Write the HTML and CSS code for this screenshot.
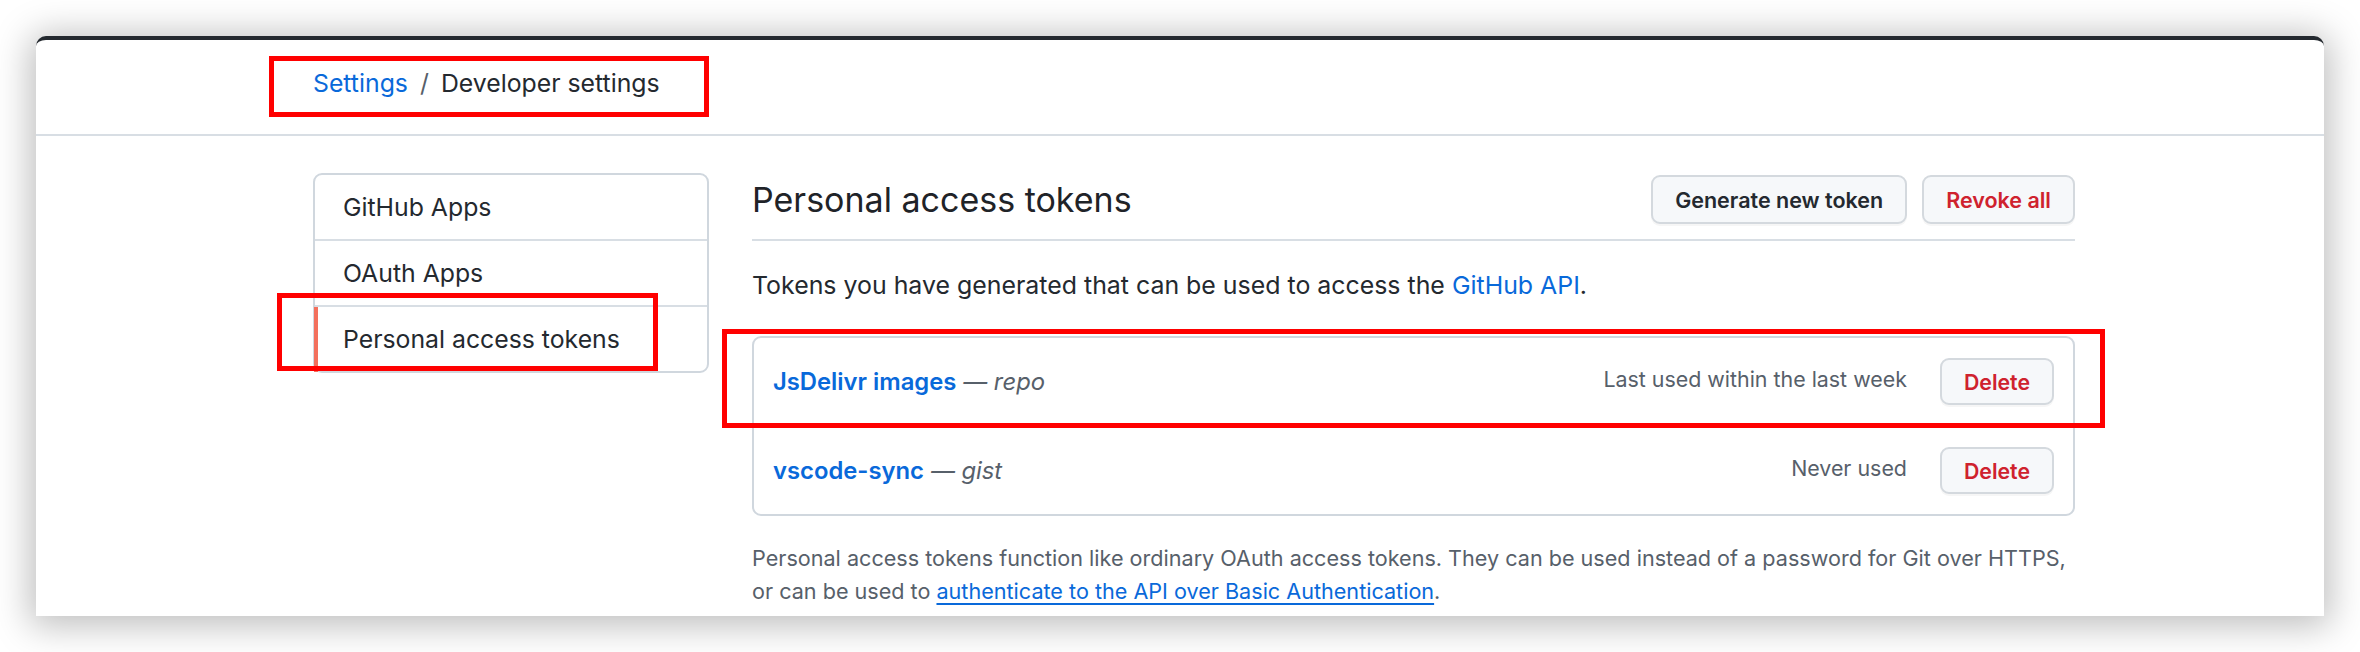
FILE: index.html
```html
<!DOCTYPE html>
<html>
<head>
<meta charset="utf-8">
<link rel="stylesheet" href="styles.css">
</head>
<body>
<div class="window">
  <header class="header">
    <nav class="breadcrumb">
      <a class="link" href="#">Settings</a><span class="sep">/</span><span class="current">Developer settings</span>
    </nav>
  </header>

  <div class="layout">
    <aside class="sidebar">
      <a class="menu-item" href="#">GitHub Apps</a>
      <a class="menu-item" href="#">OAuth Apps</a>
      <a class="menu-item selected" href="#">Personal access tokens</a>
    </aside>

    <main class="main">
      <div class="subhead">
        <h2 class="subhead-heading">Personal access tokens</h2>
        <div class="actions">
          <button class="btn">Generate new token</button>
          <button class="btn btn-danger">Revoke all</button>
        </div>
      </div>

      <p class="intro">Tokens you have generated that can be used to access the <a class="link" href="#">GitHub API</a>.</p>

      <div class="token-list">
        <div class="token-row">
          <div class="token-name"><a class="token-link" href="#">JsDelivr images</a><em class="scope">— repo</em></div>
          <span class="last-used">Last used within the last week</span>
          <button class="btn btn-sm btn-danger">Delete</button>
        </div>
        <div class="token-row">
          <div class="token-name"><a class="token-link" href="#">vscode-sync</a><em class="scope">— gist</em></div>
          <span class="last-used">Never used</span>
          <button class="btn btn-sm btn-danger">Delete</button>
        </div>
      </div>

      <p class="note"><span class="note-line">Personal access tokens function like ordinary OAuth access tokens. They can be used instead of a password for Git over HTTPS,</span><span class="note-line">or can be used to <a class="note-link" href="#">authenticate to the API over Basic Authentication</a>.</span></p>
    </main>
  </div>

  <div class="mark mark-breadcrumb"></div>
  <div class="mark mark-menu"></div>
  <div class="mark mark-token"></div>
</div>
</body>
</html>
```
FILE: styles.css
```css
* { box-sizing: border-box; }

html, body {
  margin: 0;
  background: #ffffff;
}

body {
  padding: 36px;
  font-family: Inter, "Liberation Sans", sans-serif;
  color: #24292f;
}

.window {
  position: relative;
  width: 2288px;
  height: 580px;
  background: #ffffff;
  border-top: 4px solid #24292f;
  border-radius: 10px 10px 0 0;
  box-shadow: 0 4px 36px 6px rgba(0, 0, 0, 0.26);
  overflow: hidden;
}

/* Header / breadcrumb */
.header {
  height: 96px;
  display: flex;
  align-items: center;
  padding: 0 0 8px 277px;
  border-bottom: 2px solid #d8dee4;
}

.breadcrumb {
  font-size: 24.8px;
  line-height: 36px;
  display: flex;
  align-items: baseline;
}

.link {
  color: #0969da;
  text-decoration: none;
}

.sep {
  color: #57606a;
  margin: 0 12px;
}

.current {
  color: #24292f;
}

/* Layout */
.layout {
  display: flex;
  align-items: flex-start;
  padding: 37px 0 0 277px;
}

/* Sidebar */
.sidebar {
  width: 396px;
  margin-right: 43px;
  border: 2px solid #d0d7de;
  border-radius: 9px;
  display: flex;
  flex-direction: column;
}

.menu-item {
  position: relative;
  display: flex;
  align-items: center;
  height: 64px;
  padding: 0 0 0 28px;
  font-size: 24.8px;
  color: #24292f;
  text-decoration: none;
}

.menu-item + .menu-item {
  height: 66px;
  border-top: 2px solid #d8dee4;
}

.menu-item.selected::before {
  content: "";
  position: absolute;
  left: -1px;
  top: 0;
  bottom: -1px;
  width: 4px;
  background: #f3705d;
}

/* Main */
.main {
  width: 1323px;
}

.subhead {
  display: flex;
  align-items: center;
  justify-content: space-between;
  padding: 2px 0 15px;
  border-bottom: 2px solid #d8dee4;
}

.subhead-heading {
  margin: 0;
  font-size: 34px;
  font-weight: 400;
  line-height: 49px;
  color: #1f2328;
}

.actions {
  display: flex;
  gap: 15px;
}

.btn {
  height: 49px;
  padding: 0 22px;
  font-family: inherit;
  font-size: 21.5px;
  font-weight: 600;
  color: #24292f;
  background: #f6f8fa;
  border: 2px solid #d4d9de;
  border-radius: 9px;
  box-shadow: 0 2px 0 rgba(27, 31, 36, 0.04);
}

.btn-danger {
  color: #cf222e;
}

.btn-sm {
  height: 47px;
  padding: 0 22px;
  font-size: 21.3px;
}

.intro {
  margin: 26px 0 0;
  font-size: 24.9px;
  line-height: 37px;
  color: #24292f;
}

/* Token list */
.token-list {
  margin-top: 32px;
  border: 2px solid #d0d7de;
  border-radius: 9px;
}

.token-row {
  display: flex;
  align-items: center;
  height: 87px;
  padding: 0 19px 0 19px;
}

.token-row + .token-row {
  height: 89px;
  border-top: 2px solid #d8dee4;
}

.token-name {
  flex: 1;
  display: flex;
  align-items: baseline;
  font-size: 23.8px;
  line-height: 32px;
}

.token-link {
  color: #0969da;
  font-weight: 600;
  text-decoration: none;
}

.scope {
  margin-left: 7px;
  color: #57606a;
  font-style: italic;
}

.last-used {
  margin: 0 33px 5px 0;
  font-size: 21.4px;
  color: #57606a;
}

/* Note */
.note {
  margin: 26px 0 0;
  font-size: 21.6px;
  line-height: 33px;
  color: #57606a;
}

.note-line {
  display: block;
  white-space: nowrap;
}

.note-link {
  color: #0969da;
  text-decoration: underline;
  text-underline-offset: 4px;
  text-decoration-thickness: 2px;
}

/* Annotation marks */
.mark {
  position: absolute;
  border: 5px solid #ff0000;
  pointer-events: none;
}

.mark-breadcrumb {
  left: 233px;
  top: 16px;
  width: 440px;
  height: 61px;
}

.mark-menu {
  left: 241px;
  top: 253px;
  width: 381px;
  height: 78px;
}

.mark-token {
  left: 686px;
  top: 289px;
  width: 1383px;
  height: 99px;
}
```
